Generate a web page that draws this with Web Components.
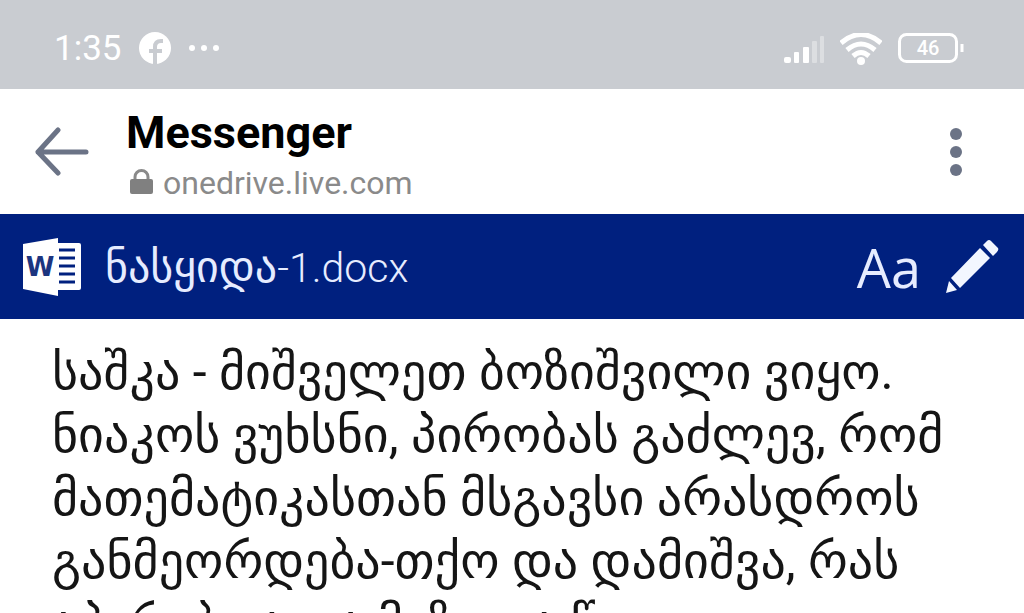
<!DOCTYPE html>
<html lang="ka">
<head>
<meta charset="utf-8">
<meta name="viewport" content="width=device-width, initial-scale=1">
<title>Messenger</title>
<style>
  html, body {
    height: 100%;
    margin: 0;
  }
  body {
    background: #fff;
    font-family: Roboto, "DejaVu Sans", sans-serif;
    overflow: hidden;
  }
</style>
</head>
<body>
<document-viewer></document-viewer>

<script>
// Custom Element: <status-bar>
class StatusBar extends HTMLElement {
  constructor() {
    super();
    this.attachShadow({ mode: 'open' });
    this.shadowRoot.innerHTML = `
      <style>
        :host {
          display: flex;
          align-items: center;
          justify-content: space-between;
          box-sizing: border-box;
          height: 89px;
          padding: 8px 60px 0 54px;
          background: #c9ccd1;
          color: #fff;
        }
        .group { display: flex; align-items: center; gap: 16px; }
        .time { font-size: 35px; line-height: 40px; }
        .level { font-size: 20px; font-weight: 500; }
        svg { display: block; }
      </style>
      <div class="group">
        <span class="time">${this.getAttribute('time')}</span>
        <svg width="82" height="36" viewBox="0 0 82 36" fill="#fff">
          <circle cx="17" cy="17" r="16"/>
          <path d="M17 34V16c0-4 2-6 6-6h2M11 20h13" fill="none" stroke="#c9ccd1" stroke-width="4"/>
          <circle cx="54" cy="17" r="3"/><circle cx="66" cy="17" r="3"/><circle cx="78" cy="17" r="3"/>
        </svg>
      </div>
      <div class="group">
        <svg width="42" height="32" viewBox="0 0 42 32" fill="#fff">
          <rect x="2" y="24" width="7" height="6" rx="2"/>
          <rect x="12" y="19" width="5" height="11" rx="1"/>
          <rect x="21" y="14" width="6" height="16" rx="1"/>
          <rect x="30" y="8" width="5" height="22" rx="1" opacity=".35"/>
          <rect x="38" y="3" width="4" height="27" rx="1" opacity=".35"/>
        </svg>
        <svg width="42" height="32" viewBox="0 0 42 32" fill="none" stroke="#fff" stroke-width="5">
          <path d="M1 10Q21-7 41 10M7 17Q21 5 35 17M13 23Q21 16 29 23"/>
          <circle cx="21" cy="28" r="4" fill="#fff" stroke="none"/>
        </svg>
        <svg width="66" height="32" viewBox="0 0 66 32" fill="none" stroke="#fff" stroke-width="3">
          <rect x="1.500" y="1.500" width="57" height="27" rx="7"/>
          <path d="M64 11v8"/>
          <text class="level" x="30" y="22" text-anchor="middle" fill="#fff" stroke="none">${this.getAttribute('battery')}</text>
        </svg>
      </div>
    `;
  }
}

// Custom Element: <browser-header>
class BrowserHeader extends HTMLElement {
  constructor() {
    super();
    this.attachShadow({ mode: 'open' });
    this.shadowRoot.innerHTML = `
      <style>
        :host {
          display: flex;
          align-items: center;
          box-sizing: border-box;
          height: 125px;
          padding: 0 48px 0 34px;
          background: #fff;
        }
        button {
          display: block;
          padding: 0;
          border: 0;
          background: none;
          color: #6b7386;
        }
        svg { display: block; }
        .page { flex: 1; min-width: 0; padding: 10px 36px 0; }
        h1 {
          margin: 0;
          color: #000;
          font-size: 45px;
          font-weight: 700;
          line-height: 52px;
        }
        .site {
          display: flex;
          align-items: center;
          gap: 10px;
          padding-left: 4px;
          color: #8a8a8a;
          font-size: 32px;
          line-height: 48px;
        }
      </style>
      <button type="button" aria-label="Back">
        <svg width="56" height="50" viewBox="0 0 56 50" fill="none" stroke="currentColor" stroke-width="5" stroke-linecap="round" stroke-linejoin="round">
          <path d="M24 3L4 25L24 46M4 25H52"/>
        </svg>
      </button>
      <div class="page">
        <h1><slot name="title"></slot></h1>
        <div class="site">
          <svg width="23" height="28" viewBox="0 0 23 28">
            <path d="M5 10V8a6.500 6.500 0 0 1 13 0v2" fill="none" stroke="#8a8a8a" stroke-width="3"/>
            <rect y="10" width="23" height="15" rx="2" fill="#808080"/>
          </svg>
          <slot name="site"></slot>
        </div>
      </div>
      <button type="button" aria-label="More options">
        <svg width="40" height="50" viewBox="0 0 40 50" fill="currentColor">
          <circle cx="20" cy="7" r="6"/><circle cx="20" cy="25" r="6"/><circle cx="20" cy="43" r="6"/>
        </svg>
      </button>
    `;
  }
}

// Custom Element: <file-toolbar>
class FileToolbar extends HTMLElement {
  constructor() {
    super();
    this.attachShadow({ mode: 'open' });
    this.shadowRoot.innerHTML = `
      <style>
        :host {
          display: flex;
          align-items: center;
          box-sizing: border-box;
          height: 105px;
          padding: 0 25px 0 22px;
          background: #00207f;
          color: #e6ecff;
        }
        svg { display: block; }
        .name {
          flex: 1;
          min-width: 0;
          padding: 2px 0 0 23px;
          font-size: 41px;
          font-weight: 300;
          line-height: 48px;
          white-space: nowrap;
        }
        ::slotted(span) { font-size: 44px; font-weight: 400; }
        .tools { display: flex; align-items: center; gap: 24px; }
        button {
          display: block;
          padding: 0;
          border: 0;
          background: none;
          color: #e6ecff;
          font: 54px/60px "Open Sans", "Noto Sans", sans-serif;
        }
        .w { font: 700 26px "DejaVu Sans", sans-serif; }
      </style>
      <svg width="60" height="60" viewBox="0 0 60 60">
        <path d="M34 6h23a2 2 0 0 1 2 2v43a2 2 0 0 1-2 2H34z" fill="#fff"/>
        <path d="M37 13h16M37 21h16M37 29h16M37 37h16M37 45h16" stroke="#00207f" stroke-width="3"/>
        <path d="M1 7L36 1v58L1 52z" fill="#fff"/>
        <text class="w" x="18" y="39" text-anchor="middle" fill="#1c357f">W</text>
      </svg>
      <div class="name"><slot></slot></div>
      <div class="tools">
        <button type="button" aria-label="Text view">Aa</button>
        <button type="button" aria-label="Edit">
          <svg width="54" height="54" viewBox="0 0 54 54" fill="#f2f6ff">
            <path d="M1 53L4 41L12 50zM6 38L35 8L45 18L15 48zM38 5L42 1Q44-1 46 1L53 8Q54 10 52 12L48 16z"/>
          </svg>
        </button>
      </div>
    `;
  }
}

// Custom Element: <document-page>
class DocumentPage extends HTMLElement {
  constructor() {
    super();
    this.attachShadow({ mode: 'open' });
    this.shadowRoot.innerHTML = `
      <style>
        :host {
          display: block;
          padding: 22px 0 0 52px;
          color: #151515;
          font-size: 50px;
          line-height: 63px;
        }
        p { margin: 0; white-space: nowrap; }
      </style>
      <p><slot></slot></p>
    `;
  }
}

// Custom Element: <document-viewer>
class DocumentViewer extends HTMLElement {
  constructor() {
    super();
    this.attachShadow({ mode: 'open' });
    this.shadowRoot.innerHTML = `
      <style>
        :host {
          display: flex;
          flex-direction: column;
          height: 100%;
          overflow: hidden;
        }
        status-bar, browser-header, file-toolbar { flex: none; }
        document-page { flex: 1; min-height: 0; overflow: hidden; }
      </style>
      <status-bar time="1:35" battery="46"></status-bar>
      <browser-header>
        <span slot="title">Messenger</span>
        <span slot="site">onedrive.live.com</span>
      </browser-header>
      <file-toolbar><span>ნასყიდა</span>-1.docx</file-toolbar>
      <document-page>
        საშკა - მიშველეთ ბოზიშვილი ვიყო.<br>
        ნიაკოს ვუხსნი, პირობას გაძლევ, რომ<br>
        მათემატიკასთან მსგავსი არასდროს<br>
        განმეორდება-თქო და დამიშვა, რას<br>
        აპირებდა და მიზე და წ
      </document-page>
    `;
  }
}

customElements.define('status-bar', StatusBar);
customElements.define('browser-header', BrowserHeader);
customElements.define('file-toolbar', FileToolbar);
customElements.define('document-page', DocumentPage);
customElements.define('document-viewer', DocumentViewer);
</script>
</body>
</html>
